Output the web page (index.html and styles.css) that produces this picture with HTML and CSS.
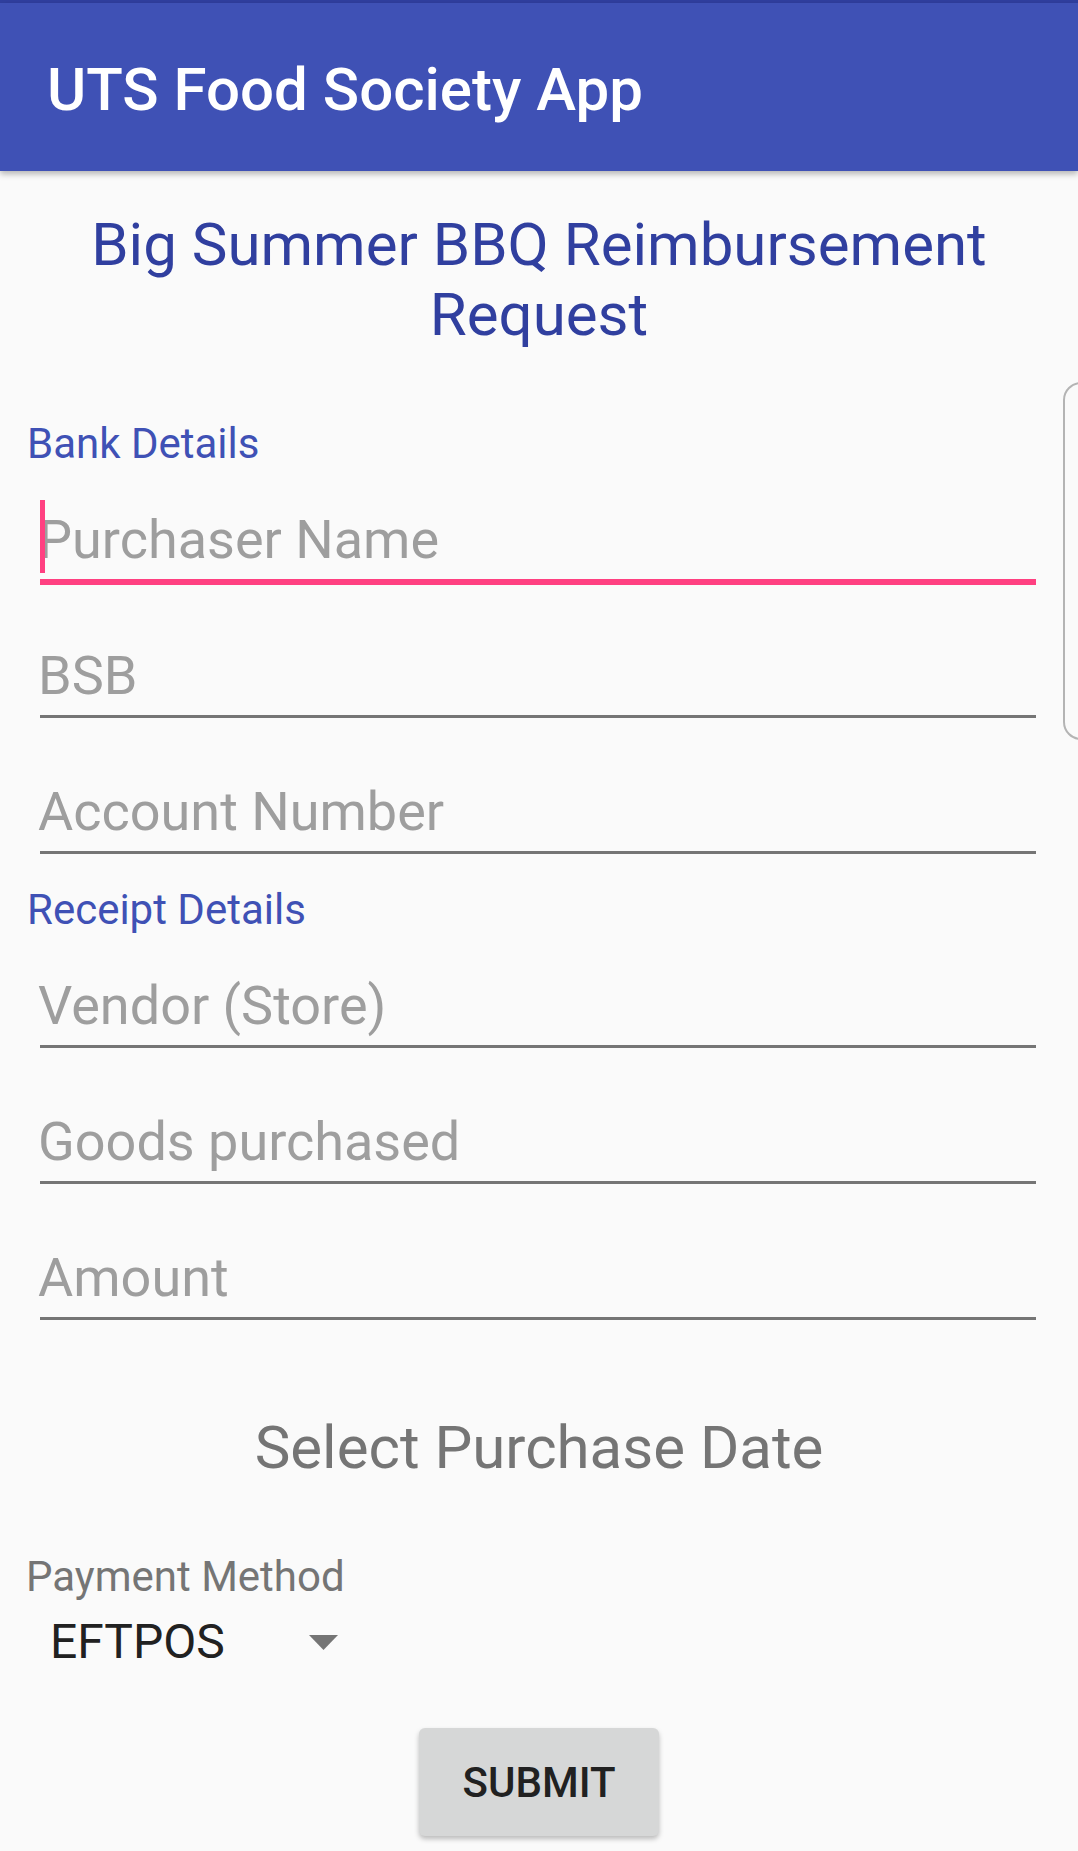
FILE: index.html
```html
<!DOCTYPE html>
<html>
<head>
<meta charset="utf-8">
<link rel="stylesheet" href="styles.css">
</head>
<body>
<div class="status"></div>
<header class="appbar"><span class="app-title">UTS Food Society App</span></header>
<main class="content">
  <h1 class="heading">Big Summer BBQ Reimbursement Request</h1>
  <div class="section-label label-bank">Bank Details</div>
  <div class="field focused"><span class="cursor"></span><span class="hint">Purchaser Name</span></div>
  <div class="field"><span class="hint">BSB</span></div>
  <div class="field"><span class="hint">Account Number</span></div>
  <div class="section-label label-receipt">Receipt Details</div>
  <div class="field"><span class="hint">Vendor (Store)</span></div>
  <div class="field"><span class="hint">Goods purchased</span></div>
  <div class="field"><span class="hint">Amount</span></div>
  <div class="date-select">Select Purchase Date</div>
  <div class="pay-label">Payment Method</div>
  <div class="spinner">
    <span class="spinner-value">EFTPOS</span>
    <svg class="arrow" width="29" height="15" viewBox="0 0 29 15"><polygon points="0,0 29,0 14.5,15" fill="#757575"/></svg>
  </div>
  <div class="btn-row"><button class="submit">SUBMIT</button></div>
</main>
<div class="edge-handle"></div>
</body>
</html>
```

FILE: styles.css
```css
html, body {
  margin: 0;
  padding: 0;
}
body {
  background: #fafafa;
  font-family: Roboto, "Noto Sans", "Liberation Sans", sans-serif;
  width: 1078px;
  height: 1851px;
  overflow: hidden;
  position: relative;
}
.status {
  height: 3px;
  background: #303f9f;
}
.appbar {
  box-sizing: border-box;
  height: 168px;
  background: #3f51b5;
  padding: 52px 0 0 47px;
  box-shadow: 0 3px 6px rgba(0, 0, 0, 0.28);
  position: relative;
  z-index: 1;
}
.app-title {
  display: block;
  font-size: 60px;
  line-height: 70px;
  font-weight: 500;
  color: #ffffff;
}
.content {
  display: flow-root;
}
.heading {
  margin: 39px 30px 0;
  font-size: 60px;
  line-height: 70px;
  font-weight: 400;
  color: #303f9f;
  text-align: center;
}
.section-label {
  margin-left: 27px;
  font-size: 42px;
  line-height: 49px;
  color: #3f51b5;
}
.label-bank {
  margin-top: 69px;
}
.label-receipt {
  margin-top: 31px;
}
.field {
  position: relative;
  margin: 40px 42px 0 40px;
  padding-bottom: 8px;
  border-bottom: 3px solid #757575;
  font-size: 54px;
  line-height: 63px;
  color: #9e9e9e;
}
.field + .field {
  margin-top: 62px;
}
.field.focused {
  border-bottom: 6px solid #ff4081;
  margin-bottom: -3px;
}
.hint {
  display: block;
  margin-left: -2px;
}
.cursor {
  position: absolute;
  left: 0;
  top: -8px;
  width: 5px;
  height: 73px;
  background: #ff4081;
}
.date-select {
  margin-top: 93px;
  font-size: 60px;
  line-height: 70px;
  color: #757575;
  text-align: center;
}
.pay-label {
  margin: 69px 0 0 26px;
  font-size: 42px;
  line-height: 49px;
  color: #757575;
}
.spinner {
  display: flex;
  align-items: center;
  width: 288px;
  margin: 13px 0 0 50px;
  height: 56px;
}
.spinner-value {
  font-size: 48px;
  line-height: 56px;
  color: #212121;
}
.arrow {
  margin-left: auto;
  display: block;
}
.btn-row {
  display: flex;
  justify-content: center;
  margin-top: 58px;
}
.submit {
  width: 240px;
  height: 108px;
  border: none;
  border-radius: 6px;
  background: #d6d7d7;
  box-shadow: 0 3px 5px rgba(0, 0, 0, 0.25);
  font-family: Roboto, "Noto Sans", "Liberation Sans", sans-serif;
  font-size: 42px;
  font-weight: 500;
  color: #212121;
  padding: 0;
}
.edge-handle {
  position: absolute;
  left: 1063px;
  top: 382px;
  width: 40px;
  height: 354px;
  border: 2px solid #b4b4b4;
  border-radius: 18px;
  background: #fafafa;
}
```
